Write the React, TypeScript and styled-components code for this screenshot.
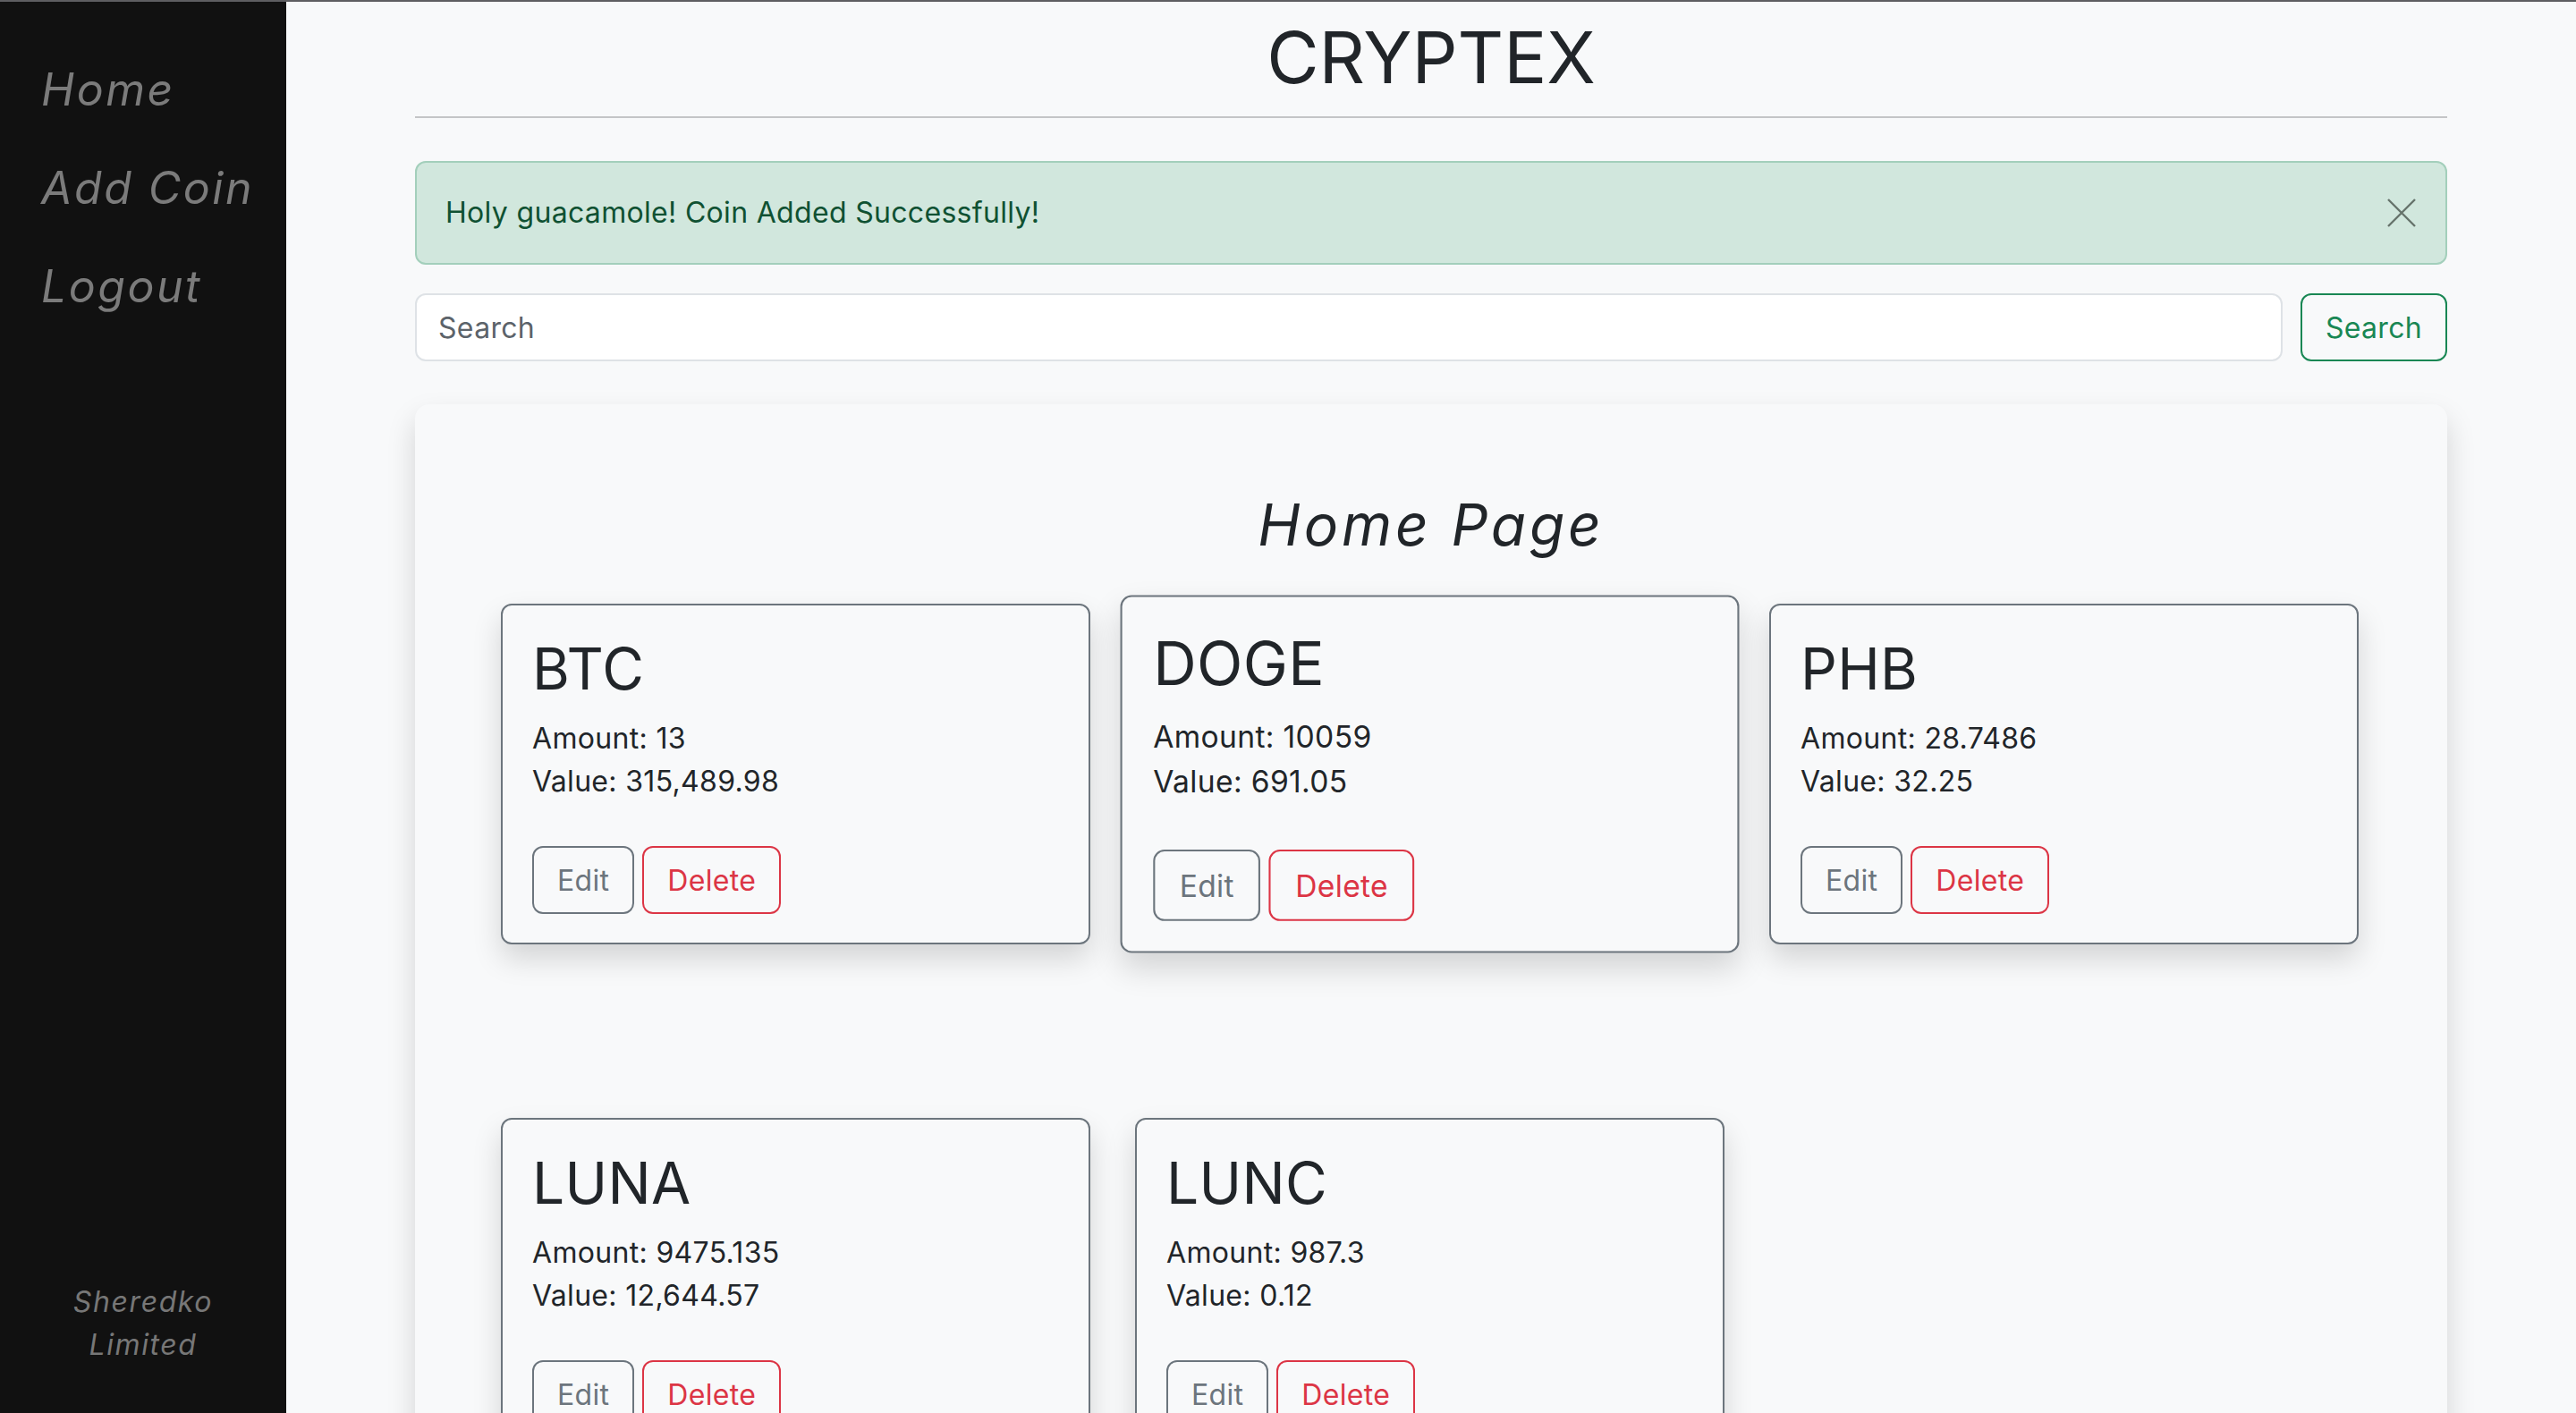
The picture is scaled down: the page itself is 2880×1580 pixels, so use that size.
import React from 'react'
import styled, { createGlobalStyle, css } from 'styled-components'

const GlobalStyle = createGlobalStyle`
  * { box-sizing: border-box; }
  body {
    margin: 0;
    background: #f8f9fa;
    font-family: Inter, "Open Sans", sans-serif;
    letter-spacing: 0.02em;
    color: #212529;
  }
`

const Shell = styled.div`
  display: flex;
  align-items: flex-start;
  border-top: 2px solid #5e5e61;
  min-height: 100vh;
`

const Sidebar = styled.aside`
  position: sticky;
  top: 0;
  width: 320px;
  flex-shrink: 0;
  height: calc(100vh - 2px);
  background: #111111;
  display: flex;
  flex-direction: column;
  justify-content: space-between;
`

const Nav = styled.nav`
  display: flex;
  flex-direction: column;
  padding: 43px 0 0 46px;
`

const NavLink = styled.a`
  font-size: 50px;
  line-height: 110px;
  font-style: italic;
  letter-spacing: 0.05em;
  color: #7b7b7b;
  text-decoration: none;
  cursor: pointer;
`

const Footer = styled.div`
  text-align: center;
  font-size: 32px;
  line-height: 48px;
  font-style: italic;
  letter-spacing: 0.05em;
  color: #777777;
  padding-bottom: 52px;
`

const Main = styled.main`
  flex: 1;
  padding: 0 144px 96px;
`

const Title = styled.h1`
  margin: 14px 0 0;
  font-size: 80px;
  line-height: 96px;
  font-weight: 400;
  letter-spacing: 0;
  text-align: center;
  color: #212529;
`

const Rule = styled.hr`
  margin: 18px 0 0;
  border: none;
  border-top: 2px solid #c4c5c7;
`

const Alert = styled.div`
  margin-top: 48px;
  display: flex;
  align-items: center;
  justify-content: space-between;
  padding: 32px 32px 32px 32px;
  background: #d1e7dd;
  border: 2px solid #a3cfbb;
  border-radius: 12px;
  color: #0f5132;
  font-size: 32px;
  line-height: 48px;
`

const CloseButton = styled.button`
  background: none;
  border: none;
  padding: 0;
  display: flex;
  cursor: pointer;
`

const SearchRow = styled.form`
  margin-top: 32px;
  display: flex;
  gap: 20px;
`

const SearchInput = styled.input`
  flex: 1;
  height: 76px;
  padding: 0 24px;
  border: 2px solid #dee2e6;
  border-radius: 12px;
  background: #fff;
  font-family: inherit;
  letter-spacing: inherit;
  font-size: 32px;
  color: #212529;
  &::placeholder { color: #5c636a; }
`

const OutlineButton = styled.button<{ $color: string }>`
  height: 76px;
  padding: 0 26px;
  border: 2px solid ${p => p.$color};
  border-radius: 12px;
  background: transparent;
  color: ${p => p.$color};
  font-family: inherit;
  letter-spacing: inherit;
  font-size: 32px;
  cursor: pointer;
`

const Panel = styled.section`
  margin-top: 48px;
  padding: 96px;
  border-radius: 16px;
  background: #f8f9fa;
  box-shadow: 0 16px 32px rgba(0, 0, 0, 0.15);
`

const PanelHeading = styled.h2`
  margin: 0 0 50px;
  font-size: 64px;
  line-height: 77px;
  font-weight: 400;
  font-style: italic;
  letter-spacing: 0.06em;
  text-align: center;
`

const CardGrid = styled.div`
  display: grid;
  grid-template-columns: repeat(3, 659px);
  column-gap: 50px;
  row-gap: 194px;
`

const Card = styled.div<{ $hovered?: boolean }>`
  padding: 32px 33px;
  border: 2px solid #6c757d;
  border-radius: 12px;
  background: #f8f9fa;
  box-shadow: 0 16px 32px rgba(0, 0, 0, 0.15);
  ${p => p.$hovered && css`
    transform: scale(1.05);
  `}
`

const CoinName = styled.h3`
  margin: 0 0 16px;
  font-size: 64px;
  line-height: 77px;
  font-weight: 400;
`

const CoinText = styled.p`
  margin: 0 0 48px;
  font-size: 32px;
  line-height: 48px;
`

const ButtonRow = styled.div`
  display: flex;
  gap: 9px;
`

const coins = [
  { name: 'BTC', amount: '13', value: '315,489.98' },
  { name: 'DOGE', amount: '10059', value: '691.05', hovered: true },
  { name: 'PHB', amount: '28.7486', value: '32.25' },
  { name: 'LUNA', amount: '9475.135', value: '12,644.57' },
  { name: 'LUNC', amount: '987.3', value: '0.12' },
]

const App = () => {
  return (
    <>
      <GlobalStyle />
      <Shell>
        <Sidebar>
          <Nav>
            <NavLink>Home</NavLink>
            <NavLink>Add Coin</NavLink>
            <NavLink>Logout</NavLink>
          </Nav>
          <Footer>
            Sheredko
            <br />
            Limited
          </Footer>
        </Sidebar>
        <Main>
          <Title>CRYPTEX</Title>
          <Rule />
          <Alert>
            <span>Holy guacamole! Coin Added Successfully!</span>
            <CloseButton aria-label="Close">
              <svg width="34" height="34" viewBox="0 0 34 34">
                <path d="M2 2 L32 32 M32 2 L2 32" stroke="#66736b" strokeWidth="2.4" fill="none" />
              </svg>
            </CloseButton>
          </Alert>
          <SearchRow onSubmit={e => e.preventDefault()}>
            <SearchInput placeholder="Search" />
            <OutlineButton $color="#198754" type="submit">Search</OutlineButton>
          </SearchRow>
          <Panel>
            <PanelHeading>Home Page</PanelHeading>
            <CardGrid>
              {coins.map(coin => (
                <Card key={coin.name} $hovered={coin.hovered}>
                  <CoinName>{coin.name}</CoinName>
                  <CoinText>
                    Amount: {coin.amount}
                    <br />
                    Value: {coin.value}
                  </CoinText>
                  <ButtonRow>
                    <OutlineButton $color="#6c757d">Edit</OutlineButton>
                    <OutlineButton $color="#dc3545">Delete</OutlineButton>
                  </ButtonRow>
                </Card>
              ))}
            </CardGrid>
          </Panel>
        </Main>
      </Shell>
    </>
  )
}

export default App
